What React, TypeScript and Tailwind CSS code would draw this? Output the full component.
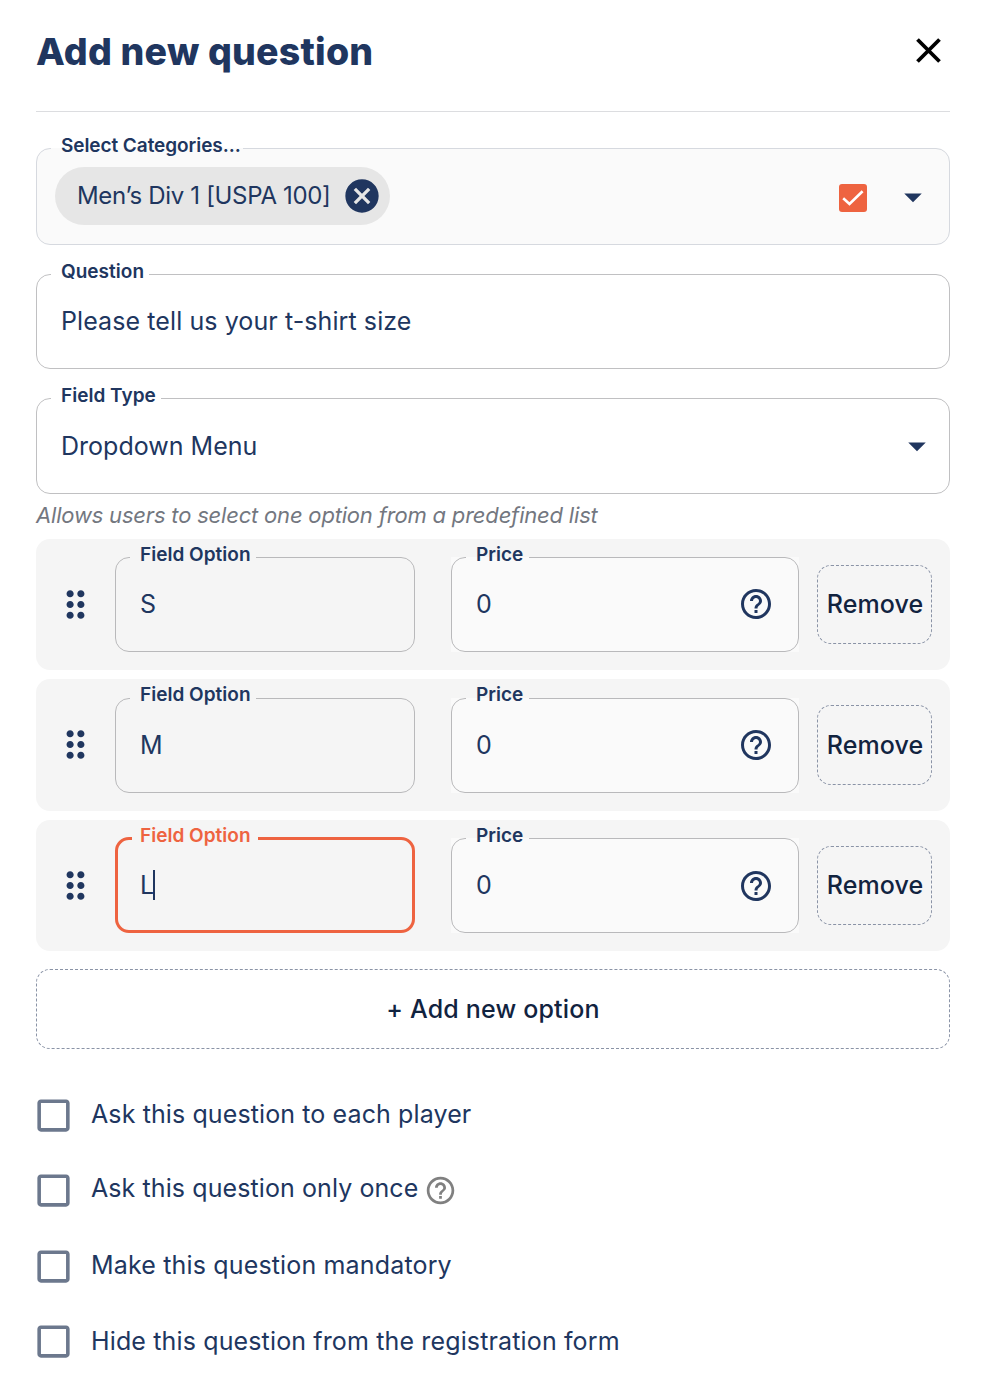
import type { ReactNode } from "react";
import {
  MdArrowDropDown,
  MdCancel,
  MdCheckBoxOutlineBlank,
  MdDragIndicator,
  MdHelpOutline,
} from "react-icons/md";

type OutlinedProps = {
  label: string;
  notch: string;
  box: string;
  border?: string;
  labelStyle?: string;
  children: ReactNode;
};

function Outlined({
  label,
  notch,
  box,
  border = "border-[#c0c0c2] border px-[14px]",
  labelStyle = "-top-[15px] text-[#20365f] tracking-[0.02px]",
  children,
}: OutlinedProps) {
  return (
    <div className={`relative flex items-center ${box}`}>
      <fieldset
        className={`pointer-events-none absolute inset-x-0 -top-[5px] bottom-0 min-w-0 rounded-[14px] ${border}`}
      >
        <legend className={`h-[11px] ${notch}`} />
      </fieldset>
      <span
        className={`absolute left-[25px] whitespace-nowrap text-[19px] leading-[26px] font-semibold ${labelStyle}`}
      >
        {label}
      </span>
      {children}
    </div>
  );
}

type RowProps = {
  value: string;
  row: string;
  field: string;
  price: string;
  remove: string;
  help?: string;
  labelTop?: string;
  focused?: boolean;
};

function OptionRow({
  value,
  row,
  field,
  price,
  remove,
  help = "",
  labelTop = "-top-[15px]",
  focused,
}: RowProps) {
  return (
    <div className={`flex items-start rounded-[14px] bg-[#f5f5f5] ${row}`}>
      <div className="flex h-[131px] w-[79px] items-center justify-center">
        <MdDragIndicator className="size-[43px]" />
      </div>
      <Outlined
        label="Field Option"
        notch="w-[126px]"
        box={`w-[300px] pl-[25px] ${field}`}
        border={
          focused
            ? "border-[3px] border-[#ee6340] px-[14px]"
            : "border border-[#b9b9bb] px-[14px]"
        }
        labelStyle={`tracking-[0.02px] ${labelTop} ${focused ? "text-[#ee6340]" : "text-[#20365f]"}`}
      >
        <span className="text-[25px] tracking-[0.12px]">{value}</span>
        {focused && <span className="mb-[1px] -ml-[1px] h-[30px] w-[2px] bg-[#20365f]" />}
      </Outlined>
      <Outlined
        label="Price"
        notch="w-[63px]"
        box={`ml-[36px] w-[348px] bg-[#fafafa] pr-[25px] pl-[25px] ${price}`}
        border="border border-[#b9b9bb] px-[14px]"
        labelStyle={`tracking-[0.02px] text-[#20365f] ${labelTop}`}
      >
        <span className="flex-1 text-[25px] tracking-[0.12px]">0</span>
        <MdHelpOutline className={`size-[36px] ${help}`} />
      </Outlined>
      <button
        className={`ml-[18px] w-[115px] rounded-[14px] border border-dashed border-[#8a93a6] pl-[1px] text-center text-[25px] font-medium tracking-[0.08px] text-[#11233f] ${remove}`}
      >
        Remove
      </button>
    </div>
  );
}

function CheckItem({ row, text, children }: { row: string; text: string; children: ReactNode }) {
  return (
    <label className={`flex items-start ${row}`}>
      <MdCheckBoxOutlineBlank className="-ml-[4px] size-[43px] shrink-0 text-[#6c788d]" />
      <span className={`ml-[16px] flex items-center text-[25px] leading-[38px] ${text}`}>
        {children}
      </span>
    </label>
  );
}

export default function App() {
  return (
    <main className="h-[1394px] w-[988px] overflow-hidden bg-white pr-[38px] pl-[36px] font-['Inter',sans-serif] text-[#20365f]">
      <header className="flex h-[112px] items-start justify-between border-b border-[#dcdde0]">
        <h1 className="mt-[27px] text-[37.5px] leading-[50px] font-extrabold tracking-[0.22px]">
          Add new question
        </h1>
        <svg viewBox="0 0 43 43" className="mt-[29px] size-[43px]">
          <path d="M10.5 10.5 L32.5 32.5 M32.5 10.5 L10.5 32.5" stroke="#000" strokeWidth="3.8" />
        </svg>
      </header>

      <Outlined
        label="Select Categories..."
        notch="w-[192px]"
        box="mt-[36px] h-[97px] rounded-[14px] bg-[#fafafa] pl-[19px]"
        border="border border-[#d6d9df] px-[14px]"
        labelStyle="-top-[15px] text-[#20365f] tracking-[-0.07px]"
      >
        <div className="mb-[2px] flex h-[58px] w-[335px] items-center justify-between rounded-full bg-[#e6e6e6] pr-[8px] pl-[22px]">
          <span className="pt-[1px] text-[24px] tracking-[-0.33px]">Men’s Div 1 [USPA 100]</span>
          <MdCancel className="size-[40px]" />
        </div>
        <svg viewBox="0 0 28 28" className="mt-[2px] ml-auto size-[28px]">
          <rect width="28" height="28" rx="3" fill="#ee6340" />
          <path d="M4.2 14.2 L10.5 20 L23.6 7.2" fill="none" stroke="#fff" strokeWidth="2.6" />
        </svg>
        <MdArrowDropDown className="mr-[16px] ml-[25px] size-[42px]" />
      </Outlined>

      <Outlined label="Question" notch="w-[98px]" box="mt-[29px] h-[95px] pl-[25px]">
        <span className="text-[25px] tracking-[0.09px]">Please tell us your t-shirt size</span>
      </Outlined>

      <Outlined label="Field Type" notch="w-[110px]" box="mt-[29px] h-[96px] pr-[12px] pl-[25px]">
        <span className="flex-1 pt-[1px] text-[25px] tracking-[0.01px]">Dropdown Menu</span>
        <MdArrowDropDown className="size-[42px]" />
      </Outlined>

      <p className="mt-[5px] h-[40px] text-[22px] leading-[32px] tracking-[-0.19px] text-[#737780] italic">
        Allows users to select one option from a predefined list
      </p>

      <section className="flex flex-col gap-[9px]">
        <OptionRow
          value="S"
          row="h-[131px]"
          field="mt-[18px] h-[95px]"
          price="mt-[18px] h-[95px]"
          remove="mt-[26px] h-[79px]"
          help="mb-[2px]"
        />
        <OptionRow
          value="M"
          row="h-[132px]"
          field="mt-[19px] h-[95px]"
          price="mt-[19px] h-[95px]"
          remove="mt-[26px] h-[80px] pt-[1px]"
          help="mb-[2px]"
          labelTop="-top-[16px]"
        />
        <OptionRow
          focused
          value="L"
          row="h-[131px]"
          field="mt-[18px] h-[95px]"
          price="mt-[18px] h-[95px]"
          remove="mt-[26px] h-[79px]"
        />
      </section>

      <button className="mt-[18px] h-[80px] w-full rounded-[14px] border border-dashed border-[#8a93a6] pt-[2px] text-center text-[25px] font-medium tracking-[0.17px] text-[#11233f]">
        + Add new option
      </button>

      <section className="mt-[45px]">
        <CheckItem row="h-[75px]" text="mt-[1px] tracking-[0.11px]">
          Ask this question to each player
        </CheckItem>
        <CheckItem row="h-[76px]" text="tracking-[0.09px]">
          Ask this question only once
          <MdHelpOutline className="mt-[4px] ml-[6px] size-[33px] text-[#808080]" />
        </CheckItem>
        <CheckItem row="h-[75px]" text="mt-[1px] tracking-[0.16px]">
          Make this question mandatory
        </CheckItem>
        <CheckItem row="h-[75px]" text="mt-[2px] tracking-[0.14px]">
          Hide this question from the registration form
        </CheckItem>
      </section>
    </main>
  );
}
